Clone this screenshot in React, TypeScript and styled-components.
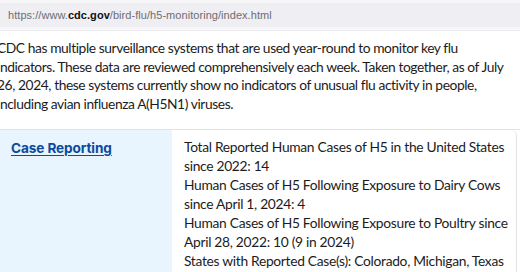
import React from "react";
import styled, { createGlobalStyle } from "styled-components";

const Global = createGlobalStyle`
  html, body { margin: 0; padding: 0; background: #ffffff; }
  body { width: 520px; height: 272px; overflow: hidden; font-family: Lato, sans-serif; }
`;

const Page = styled.div`
  width: 520px;
  height: 272px;
  overflow: hidden;
  display: flex;
  flex-direction: column;
  background: #fff;
`;

const AddressStrip = styled.div`
  padding: 3px 0 3px 0;
  background: #f7f7f9;
  border-bottom: 1px solid #ececef;
`;

const AddressBar = styled.div`
  height: 24px;
  background: #efeff3;
  display: flex;
  align-items: center;
  padding-left: 8px;
  font-family: "Liberation Sans", Arial, sans-serif;
  font-size: 11px;
  color: #6d6d72;
  letter-spacing: 0.05px;
`;

const Host = styled.span`
  color: #111;
  font-weight: 700;
`;

const Intro = styled.div`
  margin: 8px 0 0 -3px;
  font-family: Lato, sans-serif;
  font-size: 13.8px;
  letter-spacing: -0.42px;
  line-height: 18.7px;
  color: #1c1c1c;
`;

const Line = styled.div`
  white-space: nowrap;
`;

const Table = styled.div`
  margin-top: 15px;
  display: grid;
  grid-template-columns: 172px 345px;
  border-top: 1px solid #e3e3e3;
  flex: 1;
`;

const LabelCell = styled.div`
  background: #e8f4fe;
  padding: 7px 0 0 11px;
`;

const LabelLink = styled.a`
  font-family: Inter, sans-serif;
  font-weight: 700;
  font-size: 13.6px;
  color: #0a4b9c;
  text-decoration: underline;
  text-underline-offset: 2px;
  letter-spacing: -0.1px;
`;

const ValueCell = styled.div`
  background: #fff;
  border-right: 1px solid #e3e3e3;
  border-top-right-radius: 6px;
  padding: 7px 0 0 12px;
  font-family: Lato, sans-serif;
  font-size: 13.8px;
  letter-spacing: -0.3px;
  line-height: 19px;
  color: #1c1c1c;
`;

export default function App() {
  return (
    <Page>
      <Global />
      <AddressStrip>
        <AddressBar>
          https://www.<Host>cdc.gov</Host>/bird-flu/h5-monitoring/index.html
        </AddressBar>
      </AddressStrip>
      <Intro>
        <Line>CDC has multiple surveillance systems that are used year-round to monitor key flu</Line>
        <Line>indicators. These data are reviewed comprehensively each week. Taken together, as of July</Line>
        <Line>26, 2024, these systems currently show no indicators of unusual flu activity in people,</Line>
        <Line>including avian influenza A(H5N1) viruses.</Line>
      </Intro>
      <Table>
        <LabelCell>
          <LabelLink href="#">Case Reporting</LabelLink>
        </LabelCell>
        <ValueCell>
          <Line>Total Reported Human Cases of H5 in the United States</Line>
          <Line>since 2022: 14</Line>
          <Line>Human Cases of H5 Following Exposure to Dairy Cows</Line>
          <Line>since April 1, 2024: 4</Line>
          <Line>Human Cases of H5 Following Exposure to Poultry since</Line>
          <Line>April 28, 2022: 10 (9 in 2024)</Line>
          <Line>States with Reported Case(s): Colorado, Michigan, Texas</Line>
        </ValueCell>
      </Table>
    </Page>
  );
}
